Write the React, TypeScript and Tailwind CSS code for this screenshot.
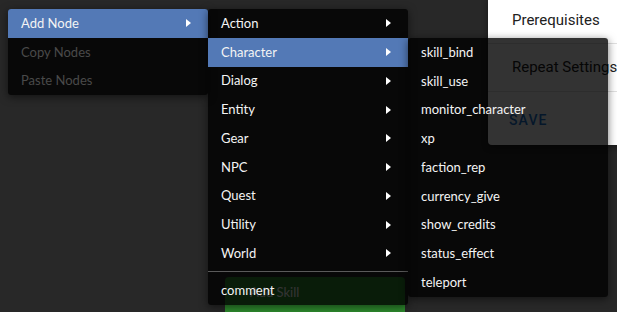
import React from "react";

const Arrow = () => (
  <svg width="5" height="8" viewBox="0 0 5 8" className="shrink-0">
    <path d="M0 0 L5 4 L0 8 Z" fill="#ffffff" />
  </svg>
);

type ItemProps = { label: string; active?: boolean; disabled?: boolean; sub?: boolean };

const Item = ({ label, active, disabled, sub }: ItemProps) => (
  <div
    className={`h-[28.75px] flex items-center justify-between pl-[13px] pr-[17px] ${
      active ? "bg-[#5379b6]" : ""
    } ${disabled ? "text-[#4a4a4a]" : "text-[#f4f4f4]"}`}
  >
    <span>{label}</span>
    {sub ? <Arrow /> : null}
  </div>
);

const menuCls =
  "absolute w-[200px] bg-black/80 rounded-[3px] shadow-[0_2px_8px_rgba(0,0,0,0.55)] text-[13px] leading-none overflow-hidden";

export default function App() {
  const cats = ["Action", "Character", "Dialog", "Entity", "Gear", "NPC", "Quest", "Utility", "World"];
  const nodes = [
    "skill_bind",
    "skill_use",
    "monitor_character",
    "xp",
    "faction_rep",
    "currency_give",
    "show_credits",
    "status_effect",
    "teleport",
  ];
  return (
    <div
      className="relative w-[617px] h-[312px] overflow-hidden bg-[#282828]"
      style={{ fontFamily: "Lato, 'Open Sans', sans-serif" }}
    >
      {/* page content behind the menus */}
      <div className="flex flex-col">
        <div className="flex justify-end mt-[-4px]">
          <div
            className="w-[145px] mr-[-16px] bg-white rounded-[4px] shadow-[0_2px_6px_rgba(0,0,0,0.4)] flex flex-col text-[15px] text-[#212121]"
            style={{ fontFamily: "Roboto, sans-serif" }}
          >
            <div className="h-[48px] flex items-center pl-[24px] pt-[1px] border-b border-[#e0e0e0]">Prerequisites</div>
            <div className="h-[48px] flex items-center pl-[24px] border-b border-[#e0e0e0] whitespace-nowrap">
              Repeat Settings
            </div>
            <div className="h-[53px] flex items-center pl-[21px] pt-[4px] text-[14px] font-medium tracking-[0.08em] text-[#1976d2]">
              SAVE
            </div>
          </div>
        </div>
        <div className="ml-[225px] mt-[132px] w-[180px] h-[40px] rounded-[4px] bg-[#2e8b2e] flex items-start pt-[6px] pl-[25px] text-[13px] text-white">
          Add Skill
        </div>
      </div>

      {/* menu 1 */}
      <div className={`${menuCls} left-[8px] top-[9px] w-[199px]`}>
        <Item label="Add Node" active sub />
        <Item label="Copy Nodes" disabled />
        <Item label="Paste Nodes" disabled />
      </div>

      {/* menu 2 */}
      <div className={`${menuCls} left-[208px] top-[9px]`}>
        {cats.map((c) => (
          <Item key={c} label={c} sub active={c === "Character"} />
        ))}
        <div className="h-px bg-[#5a5a5a] mt-[3px] mb-[4px]" />
        <Item label="comment" />
      </div>

      {/* menu 3 */}
      <div className={`${menuCls} left-[408px] top-[38px]`}>
        {nodes.map((n) => (
          <Item key={n} label={n} />
        ))}
      </div>
    </div>
  );
}
